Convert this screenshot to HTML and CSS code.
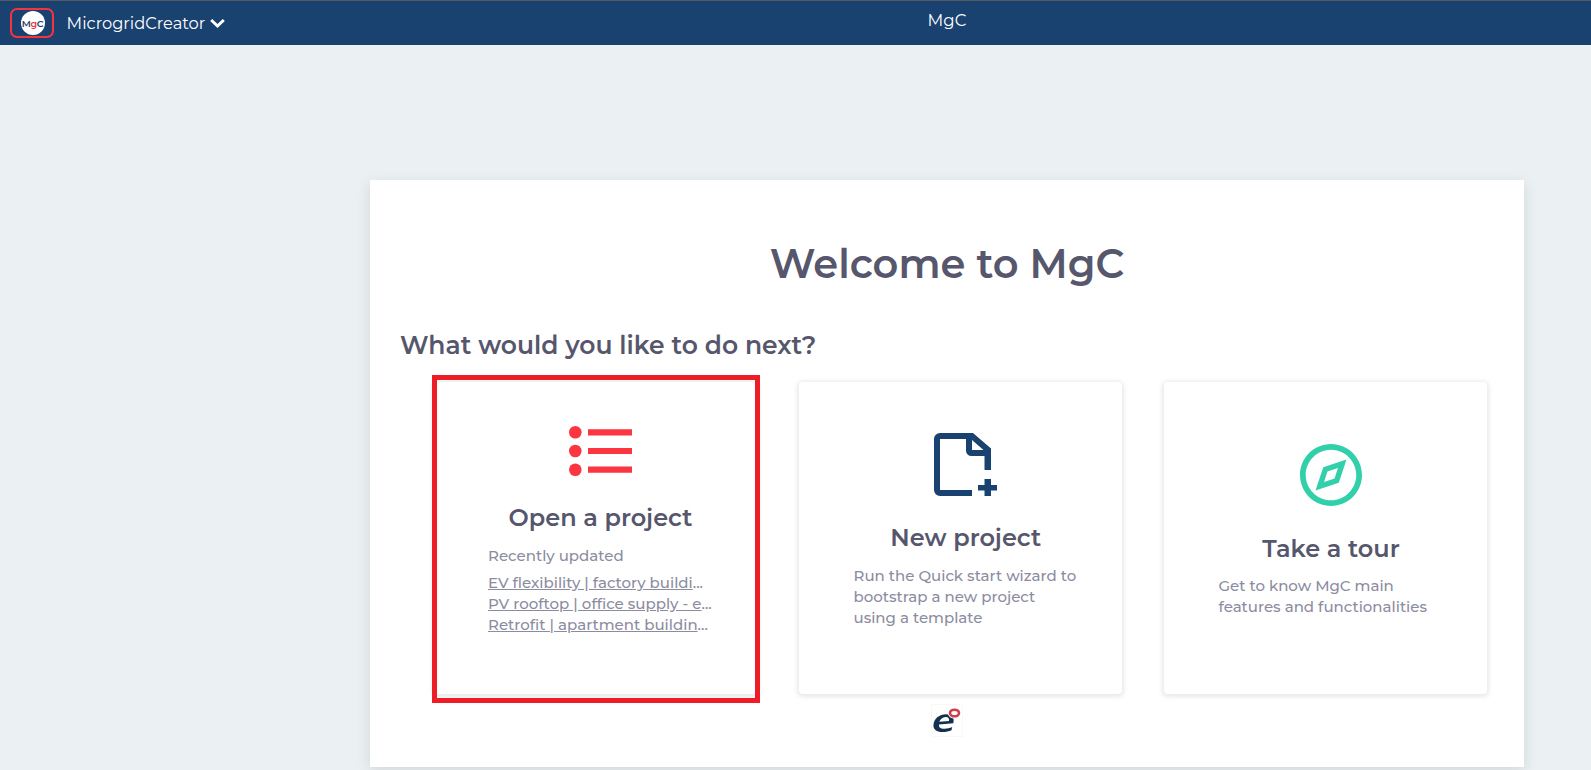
FILE: index.html
```html
<!DOCTYPE html>
<html lang="en">
<head>
<meta charset="utf-8">
<title>MgC</title>
<link rel="stylesheet" href="styles.css">
</head>
<body>
<header class="topbar">
  <div class="brand">
    <span class="brand-frame"><span class="brand-logo"><span>M</span><span class="brand-g">g</span><span>C</span></span></span>
    <span class="brand-name">MicrogridCreator</span>
    <svg class="chevron" width="15" height="11" viewBox="0 0 15 11"><path d="M1.200 2 7.500 8l6.300-6" fill="none" stroke="#fff" stroke-width="3"/></svg>
  </div>
  <div class="page-title">MgC</div>
</header>
<main class="panel">
  <h1 class="welcome">Welcome to MgC</h1>
  <h2 class="question">What would you like to do next?</h2>
  <div class="cards">
    <section class="card card-open">
      <svg class="icon" width="63" height="50" viewBox="0 0 63 50" fill="#fc3640"><circle cx="6.300" cy="6.300" r="6.300"/><circle cx="6.300" cy="25" r="6.300"/><circle cx="6.300" cy="43.700" r="6.300"/><path d="M19 3.200h44v6.300H19zM19 21.900h44v6.200H19zM19 40.500h44v6.300H19z"/></svg>
      <h3 class="card-title">Open a project</h3>
      <p class="line">Recently updated</p>
      <div class="links">
        <p class="line"><a>EV flexibility | factory buildi</a>...</p>
        <p class="line"><a>PV rooftop | office supply - e</a>...</p>
        <p class="line"><a>Retrofit | apartment buildin</a>...</p>
      </div>
    </section>
    <section class="card card-new">
      <svg class="icon" width="63" height="63" viewBox="0 0 63 63" fill="#1a4270"><path fill-rule="evenodd" d="M6 0h33l18 15.500V37h-6.500V23H37.500a5.500 5.500 0 0 1-5.500-5.500V6H6v51h32v6H6a6 6 0 0 1-6-6V6a6 6 0 0 1 6-6zM38 7v10h11.500z"/><path d="M50.500 46H57v6h6v5.500h-6V63h-6.500v-5.500H44V52h6.500z"/></svg>
      <h3 class="card-title">New project</h3>
      <p class="line">Run the Quick start wizard to</p>
      <p class="line">bootstrap a new project</p>
      <p class="line">using a template</p>
    </section>
    <section class="card card-tour">
      <svg class="icon" width="62" height="62" viewBox="2 2 20 20" fill="#31d0aa"><path d="M12 2C6.480 2 2 6.480 2 12s4.480 10 10 10 10-4.480 10-10S17.520 2 12 2zm0 18.150c-4.500 0-8.150-3.650-8.150-8.150S7.500 3.850 12 3.850s8.150 3.650 8.150 8.150-3.650 8.150-8.150 8.150z"/><path fill-rule="evenodd" d="M7 17l7.500-2.500L17 7 9.500 9.500zM9.750 14.250l1.100-3.400 3.400-1.100-1.100 3.400z"/></svg>
      <h3 class="card-title">Take a tour</h3>
      <p class="line">Get to know MgC main</p>
      <p class="line">features and functionalities</p>
    </section>
  </div>
  <div class="vendor">
    <svg width="32" height="33" viewBox="0 0 32 33"><rect x=".5" y=".5" width="31" height="32" fill="#fff" stroke="#f5f5f5" stroke-dasharray="2 1"/><path fill="#14304f" fill-rule="evenodd" d="M2.500 20.500C3.200 14.500 8.500 10.300 15 10.300c6 0 8.800 3.700 7.300 9L8 20.600c-.3 3.200 2 4.400 5.700 4.200 2.700-.1 5-.8 7.500-1.800l-.7 3.200c-2.500 1.200-5.500 1.800-9 1.800-6 0-9.600-2.600-9-7.500zM8.300 17.800l9.700-.8c.6-2.700-.9-4.200-3.500-4.100-2.900.1-5.200 2.100-6.200 4.900z"/><ellipse cx="23.500" cy="9" rx="4.500" ry="3.300" fill="#fff" stroke="#fff" stroke-width="4.500"/><ellipse cx="23.500" cy="9" rx="4.500" ry="3.300" fill="none" stroke="#cf3e4c" stroke-width="2.600"/></svg>
  </div>
</main>
</body>
</html>
```
FILE: styles.css
```css
*, *::after { box-sizing: border-box; }
html, body { height: 100%; }
body {
  margin: 0;
  overflow: hidden;
  background: #ebf0f3;
  font-family: Montserrat, Inter, "Open Sans", sans-serif;
  color: #56566c;
}
h1, h2, h3, p { margin: 0; }

.topbar {
  display: flex;
  height: 45px;
  border-top: 1px solid #555a60;
  background: #1a4270;
  color: #fff;
}
.brand {
  display: flex;
  align-items: center;
  width: 370px;
  padding-left: 10px;
}
.brand-frame {
  display: flex;
  align-items: center;
  justify-content: center;
  width: 44px;
  height: 30px;
  border: 2px solid #f5333f;
  border-radius: 7px;
}
.brand-logo {
  display: flex;
  align-items: center;
  justify-content: center;
  width: 24px;
  height: 24px;
  margin-left: 1px;
  border-radius: 50%;
  background: #fff;
  color: #1a4270;
  font-size: 9.5px;
  font-weight: 600;
  letter-spacing: -0.3px;
}
.brand-g { color: #f5333f; }
.brand-name {
  margin-left: 12.6px;
  font-size: 16.3px;
  line-height: 24px;
}
.chevron { margin-left: 4.5px; }
.page-title {
  width: 1154px;
  padding-top: 7px;
  text-align: center;
  font-size: 16.5px;
  line-height: 24px;
}

.panel {
  width: 1154px;
  height: 587px;
  margin: 135px 0 0 370px;
  padding-top: 60px;
  background: #fff;
  box-shadow: 0 4px 14px rgba(0, 0, 0, 0.11);
}
.welcome {
  text-align: center;
  font-size: 40px;
  line-height: 48px;
  font-weight: 600;
}
.question {
  margin: 42px 0 0 30px;
  font-size: 25px;
  line-height: 30px;
  font-weight: 600;
}
.cards {
  display: flex;
  gap: 42px;
  margin: 22px 0 0 64px;
}
.card {
  width: 323px;
  height: 312px;
  padding: 0 43.5px 0 54.5px;
  border-radius: 4px;
  background: #fff;
  box-shadow: 0 1px 4px 2px rgba(60, 80, 90, 0.12);
}
.card-open {
  position: relative;
  padding: 44px 44px 0 54px;
}
/* Highlight frame laid over the first card */
.card-open::after {
  content: "";
  position: absolute;
  top: -7px;
  left: -2px;
  width: 328px;
  height: 328px;
  border: 5px solid #ee1c25;
}
.card-new { padding: 51px 44px 0 54.5px; }
.card-tour { padding-top: 62px; }
.icon {
  display: block;
  margin: 0 auto 27px;
}
.card-tour .icon { margin-bottom: 28px; }
.card-title {
  margin-bottom: 12px;
  text-align: center;
  font-size: 24px;
  line-height: 30px;
  font-weight: 600;
}
.card-tour .card-title { margin-bottom: 11px; }
.line {
  white-space: nowrap;
  font-size: 15px;
  line-height: 21px;
  font-weight: 500;
  color: #8c8ca1;
}
.line a { text-decoration: underline; }
.links { padding-top: 6px; }

.vendor {
  display: flex;
  margin: 10px 0 0 561px;
}
```
